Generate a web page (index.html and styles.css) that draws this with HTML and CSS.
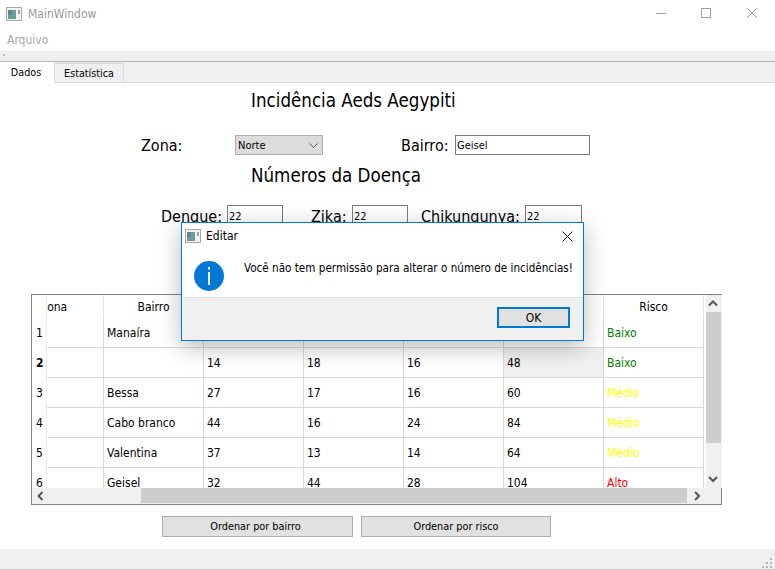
FILE: index.html
```html
<!DOCTYPE html>
<html lang="pt">
<head>
<meta charset="utf-8">
<title>MainWindow</title>
<link rel="stylesheet" href="styles.css">
</head>
<body>
<div class="window">
  <header class="titlebar">
    <svg class="appicon" width="16" height="16" viewBox="0 0 16 16"><rect x=".5" y="1.5" width="15" height="13" fill="#f2f2f2" stroke="#a8a8a8"/><rect x="2" y="4" width="8" height="9" fill="#6f9c94"/><rect x="2" y="4" width="4" height="5" fill="#5b8597"/><rect x="12" y="4" width="2" height="4" fill="#a0a0a0"/></svg>
    <span class="apptitle">MainWindow</span>
    <div class="wincontrols">
      <svg width="46" height="16" viewBox="0 0 46 16"><path d="M21 8.500h10" stroke="#a0a0a0" fill="none"/></svg>
      <svg width="46" height="16" viewBox="0 0 46 16"><rect x="20.500" y="3.500" width="9" height="9" stroke="#a0a0a0" fill="none"/></svg>
      <svg width="46" height="16" viewBox="0 0 46 16"><path d="M20 3l10 10M30 3 20 13" stroke="#a0a0a0" fill="none"/></svg>
    </div>
  </header>
  <nav class="menubar">Arquivo</nav>
  <div class="toolbar"><span class="handle"></span></div>
  <div class="tabbar">
    <span class="tab tab-active">Dados</span>
    <span class="tab">Estatística</span>
  </div>
  <main class="content">
    <h1 class="heading heading-top">Incidência Aeds Aegypiti</h1>
    <div class="formrow row-location">
      <label class="lbl lbl-zona">Zona:</label>
      <div class="combo"><span class="combo-text">Norte</span>
        <svg width="9" height="5" viewBox="0 0 9 5"><path d="M.5.500l4 4 4-4" stroke="#555" fill="none"/></svg>
      </div>
      <label class="lbl lbl-bairro">Bairro:</label>
      <div class="field field-wide">Geisel</div>
    </div>
    <h2 class="heading heading-mid">Números da Doença</h2>
    <div class="formrow row-numbers">
      <label class="lbl lbl-dengue">Dengue:</label>
      <div class="field field-num">22</div>
      <label class="lbl lbl-zika">Zika:</label>
      <div class="field field-num">22</div>
      <label class="lbl lbl-chik">Chikungunya:</label>
      <div class="field field-num field-last">22</div>
    </div>
    <section class="tableframe">
      <div class="tablebody">
        <div class="rowheads">
          <div class="rh rh-top"></div>
          <div class="rh">1</div>
          <div class="rh rh-bold">2</div>
          <div class="rh">3</div>
          <div class="rh">4</div>
          <div class="rh">5</div>
          <div class="rh">6</div>
        </div>
        <div class="viewport">
          <div class="grid">
            <div class="ch">Zona</div><div class="ch">Bairro</div><div class="ch">Dengue</div><div class="ch">Zika</div><div class="ch">Chikungunya</div><div class="ch">Total</div><div class="ch">Risco</div>
            <div class="c"></div><div class="c">Manaíra</div><div class="c"></div><div class="c"></div><div class="c"></div><div class="c"></div><div class="c low">Baixo</div>
            <div class="c"></div><div class="c"></div><div class="c">14</div><div class="c">18</div><div class="c">16</div><div class="c c-sel">48</div><div class="c low">Baixo</div>
            <div class="c"></div><div class="c">Bessa</div><div class="c">27</div><div class="c">17</div><div class="c">16</div><div class="c">60</div><div class="c mid">Médio</div>
            <div class="c"></div><div class="c">Cabo branco</div><div class="c">44</div><div class="c">16</div><div class="c">24</div><div class="c">84</div><div class="c mid">Médio</div>
            <div class="c"></div><div class="c">Valentina</div><div class="c">37</div><div class="c">13</div><div class="c">14</div><div class="c">64</div><div class="c mid">Médio</div>
            <div class="c"></div><div class="c">Geisel</div><div class="c">32</div><div class="c">44</div><div class="c">28</div><div class="c">104</div><div class="c high">Alto</div>
          </div>
        </div>
        <div class="vscroll">
          <svg width="16" height="17" viewBox="0 0 16 17"><path d="M3 10.500l4-4 4 4" stroke="#555" stroke-width="2" fill="none"/></svg>
          <div class="vtrack"><div class="vthumb"></div></div>
          <svg width="16" height="17" viewBox="0 0 16 17"><path d="M3 6l4 4 4-4" stroke="#555" stroke-width="2" fill="none"/></svg>
        </div>
      </div>
      <div class="hscroll">
        <svg width="16" height="16" viewBox="0 0 16 16"><path d="M10.500 4l-4 4 4 4" stroke="#555" stroke-width="2" fill="none"/></svg>
        <div class="htrack"><div class="hthumb"></div></div>
        <svg width="16" height="16" viewBox="0 0 16 16"><path d="M7 4l4 4-4 4" stroke="#555" stroke-width="2" fill="none"/></svg>
        <div class="corner"></div>
      </div>
    </section>
    <div class="actions">
      <button class="btn btn-bairro">Ordenar por bairro</button>
      <button class="btn btn-risco">Ordenar por risco</button>
    </div>
  </main>
  <footer class="statusbar">
    <svg width="12" height="12" viewBox="0 0 12 12"><g fill="#b4b4b4"><rect x="9" y="1" width="2" height="2"/><rect x="5" y="5" width="2" height="2"/><rect x="9" y="5" width="2" height="2"/><rect x="1" y="9" width="2" height="2"/><rect x="5" y="9" width="2" height="2"/><rect x="9" y="9" width="2" height="2"/></g></svg>
  </footer>

  <div class="dialog" role="dialog">
    <div class="dlg-title">
      <svg width="16" height="16" viewBox="0 0 16 16"><rect x=".5" y="1.500" width="15" height="13" fill="#f2f2f2" stroke="#a8a8a8"/><rect x="2" y="4" width="8" height="9" fill="#6f9c94"/><rect x="2" y="4" width="4" height="5" fill="#5b8597"/><rect x="12" y="4" width="2" height="4" fill="#a0a0a0"/></svg>
      <span class="dlg-name">Editar</span>
      <svg class="dlg-close" width="11" height="11" viewBox="0 0 11 11"><path d="M.5.500l10 10M10.500.500l-10 10" stroke="#111" fill="none"/></svg>
    </div>
    <div class="dlg-body">
      <svg class="dlg-icon" width="30" height="30" viewBox="0 0 30 30"><circle cx="15" cy="15" r="15" fill="#0078d4"/><rect x="14" y="6" width="2" height="2.500" fill="#fff"/><rect x="14" y="11" width="2" height="13" fill="#fff"/></svg>
      <p class="dlg-text">Você não tem permissão para alterar o número de incidências!</p>
    </div>
    <div class="dlg-foot"><button class="okbtn">OK</button></div>
  </div>
</div>
</body>
</html>
```

FILE: styles.css
```css
* { box-sizing: border-box; }
html, body { margin: 0; padding: 0; }
body { width: 775px; height: 570px; overflow: hidden; background: #fff; font-family: "DejaVu Sans Condensed", "DejaVu Sans", sans-serif; color: #000; }
.window { position: relative; width: 775px; height: 570px; display: flex; flex-direction: column; }

.titlebar { height: 28px; display: flex; align-items: center; padding-left: 6px; flex: none; }
.apptitle { margin-left: 6px; font-size: 12px; color: #999; }
.wincontrols { margin-left: auto; display: flex; margin-top: -2px; margin-right: 2px; }
.wincontrols svg { display: block; }

.menubar { height: 22px; flex: none; padding: 5px 0 0 7px; font-size: 12px; line-height: 15px; color: #a6a6a6; }
.toolbar { height: 12px; flex: none; background: #efefef; border-top: 1px solid #f8f8f8; border-bottom: 1px solid #b4b4b4; }
.handle { display: block; width: 2px; height: 2px; background: #c0c0c0; margin: 3px 0 0 3px; }

.tabbar { height: 21px; flex: none; display: flex; align-items: flex-end; background: #efefef; border-bottom: 1px solid #d9d9d9; }
.tab { display: block; height: 19px; width: 70px; border: 1px solid #d9d9d9; border-bottom: 0; font-size: 10.700px; line-height: 19px; text-align: center; }
.tab-active { height: 21px; width: 54px; background: #fff; border: 0; line-height: 21px; margin-bottom: -1px; padding-right: 2px; }

.content { flex: 1; min-height: 0; background: #fff; display: flex; flex-direction: column; }
.heading { margin: 0; font-weight: 400; font-size: 18.600px; line-height: 22px; padding-left: 251px; }
.heading-top { margin-top: 7px; }
.formrow { display: flex; flex: none; }
.lbl { font-size: 16px; line-height: 20px; display: block; }
.row-location { margin-top: 23px; height: 20px; }
.row-location .lbl { padding-top: 1px; }
.lbl-zona { margin-left: 141px; width: 94px; }
.combo { width: 88px; height: 20px; background: #dcdcdc; border: 1px solid #adadad; font-size: 11px; padding: 0 4px 0 2px; display: flex; align-items: center; justify-content: space-between; }
.combo-text { line-height: 18px; padding-top: 2px; }
.lbl-bairro { margin-left: 78px; width: 54px; }
.field { border: 1px solid #7a7a7a; background: #fff; font-size: 11px; line-height: 19px; padding-left: 1px; }
.field-wide { width: 135px; height: 20px; }
.heading-mid { margin-top: 10px; }
.row-numbers { margin-top: 18px; height: 24px; align-items: flex-start; }
.row-numbers .lbl { margin-top: 2px; }
.field-num { width: 56px; height: 24px; padding-top: 1px; }
.field-last { width: 57px; }
.lbl-dengue { margin-left: 161px; width: 66px; }
.lbl-zika { margin-left: 28px; width: 41px; }
.lbl-chik { margin-left: 13px; width: 104px; }

.tableframe { margin: 65px 0 0 31px; width: 691px; height: 211px; border: 1px solid #7f8287; flex: none; display: flex; flex-direction: column; font-size: 12px; }
.tablebody { flex: none; height: 193px; display: flex; }
.rowheads { width: 15px; flex: none; background: #fff; overflow: hidden; border-right: 1px solid #ececec; }
.rh { height: 30px; line-height: 31px; padding-left: 4px; }
.rh-top { height: 23px; }
.rh-bold { font-weight: 700; }
.viewport { width: 658px; flex: none; overflow: hidden; }
.grid { margin-left: -43px; display: grid; grid-template-columns: repeat(7, 100px); grid-template-rows: 23px repeat(6, 30px); width: 700px; }
.ch { height: 23px; text-align: center; line-height: 25px; white-space: nowrap; border-right: 1px solid #e6e6e6; }
.c { border-right: 1px solid #d8d8d8; border-bottom: 1px solid #d8d8d8; padding-left: 3px; line-height: 30px; white-space: nowrap; }
.c-sel { background: #f0f0f0; }
.low { color: #008000; }
.mid { color: #ffff00; }
.high { color: #ff0000; }
.vscroll { width: 16px; margin-left: 1px; flex: none; background: #f0f0f0; display: flex; flex-direction: column; }
.vscroll svg, .hscroll svg { display: block; flex: none; }
.vtrack { flex: 1; min-height: 0; }
.vthumb { height: 131px; width: 15px; background: #cdcdcd; }
.hscroll { height: 16px; flex: none; background: #f0f0f0; display: flex; }
.htrack { flex: 1; min-width: 0; padding-left: 93px; }
.hthumb { height: 15px; width: 546px; background: #cdcdcd; }
.corner { width: 17px; flex: none; }

.actions { display: flex; gap: 8px; margin: 11px 0 0 162px; }
.btn { height: 21px; padding: 0; background: #e1e1e1; border: 1px solid #adadad; font: inherit; font-size: 10.800px; color: #000; }
.btn-bairro { width: 191px; padding-right: 4px; }
.btn-risco { width: 190px; }

.statusbar { height: 21px; flex: none; background: #efefef; border-bottom: 1px solid #c4c4c4; display: flex; justify-content: flex-end; align-items: flex-end; padding: 0 2px 0 0; }

.dialog { position: absolute; left: 181px; top: 222px; width: 403px; height: 119px; background: #fff; border: 1px solid #0078d7; box-shadow: 0 6px 22px rgba(0,0,0,.28); display: flex; flex-direction: column; }
.dlg-title { height: 24px; flex: none; display: flex; align-items: center; padding: 0 10px 0 3px; margin-top: 1px; }
.dlg-name { margin-left: 5px; font-size: 12px; }
.dlg-close { margin-left: auto; }
.dlg-body { height: 49px; flex: none; position: relative; padding-left: 62px; }
.dlg-icon { position: absolute; left: 12px; top: 13px; }
.dlg-text { margin: 0; font-size: 11.600px; line-height: 16px; padding-top: 12px; white-space: nowrap; }
.dlg-foot { flex: 1; background: #f0f0f0; border-top: 1px solid #dfdfdf; display: flex; justify-content: flex-end; padding: 9px 13px 0 0; }
.okbtn { width: 73px; height: 21px; padding: 0; background: #e1e1e1; border: 2px solid #0078d7; font: inherit; font-size: 12px; color: #000; }
```
